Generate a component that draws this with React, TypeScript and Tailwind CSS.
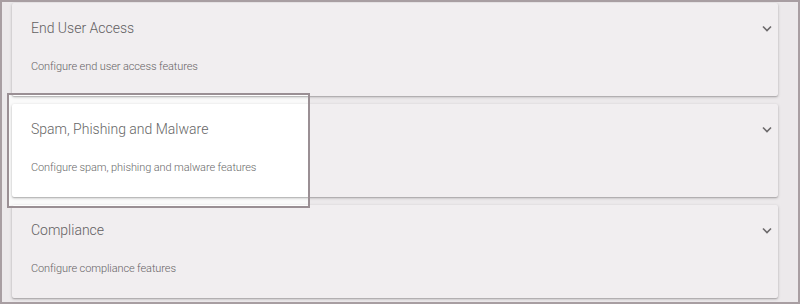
import { ReactNode } from 'react';

interface Panel {
  title: string;
  description: string;
}

const panels: Panel[] = [
  { title: 'End User Access', description: 'Configure end user access features' },
  { title: 'Spam, Phishing and Malware', description: 'Configure spam, phishing and malware features' },
  { title: 'Compliance', description: 'Configure compliance features' },
];

function Chevron() {
  return (
    <svg width="10" height="7" viewBox="0 0 10 7" fill="none" className="shrink-0">
      <path d="M1 1.5l4 4 4-4" stroke="#707070" strokeWidth="1.6" />
    </svg>
  );
}

function PanelCard({ panel }: { panel: Panel }): ReactNode {
  return (
    <div className="h-[93px] bg-white rounded-[2px] shadow-[0_1px_3px_rgba(0,0,0,0.25),0_1px_1px_rgba(0,0,0,0.12)] flex flex-col pl-[19px] pr-[6px]">
      <div className="h-[50px] flex items-center justify-between">
        <span className="text-[14px] font-light text-[#666] leading-none">{panel.title}</span>
        <Chevron />
      </div>
      <div className="text-[11px] font-light tracking-[-0.1px] text-[#6a6a6a] leading-none pt-[8px]">{panel.description}</div>
    </div>
  );
}

export default function App() {
  return (
    <div
      className="relative w-[800px] h-[304px] overflow-hidden bg-[#fafafa] border-2 border-[#a89ea2]"
      style={{ fontFamily: 'Roboto, "Noto Sans", sans-serif' }}
    >
      {/* ── PANELS ─────────────────────────────── */}
      <div className="flex flex-col gap-2 pl-[10px] pr-[20px] pt-[1px]">
        {panels.map((p) => (
          <PanelCard key={p.title} panel={p} />
        ))}
      </div>

      {/* ── HIGHLIGHT OVERLAY ──────────────────── */}
      <div className="absolute left-[5px] top-[91px] w-[303px] h-[115px] border-2 border-[#9a8f94] shadow-[0_0_0_2000px_rgba(70,30,50,0.075)] pointer-events-none" />
    </div>
  );
}
